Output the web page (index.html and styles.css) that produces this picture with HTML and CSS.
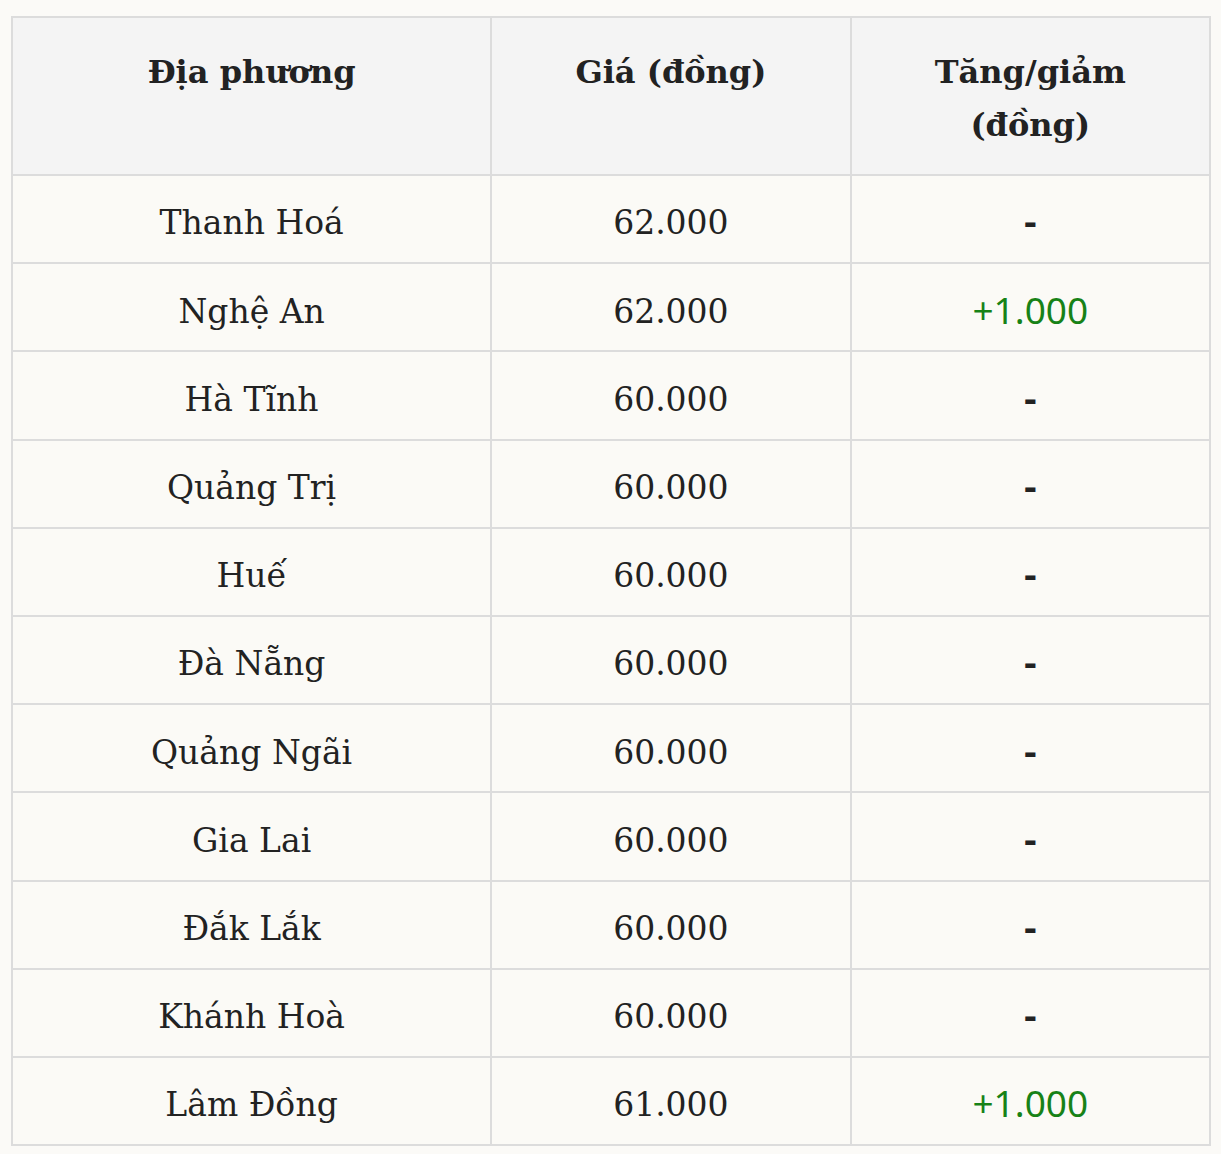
FILE: index.html
```html
<!DOCTYPE html>
<html lang="vi">
<head>
<meta charset="utf-8">
<title>Giá</title>
<link rel="stylesheet" href="styles.css">
</head>
<body>
<table class="price-table">
  <colgroup>
    <col class="col-place">
    <col class="col-price">
    <col class="col-change">
  </colgroup>
  <thead>
    <tr>
      <th>Địa phương</th>
      <th>Giá (đồng)</th>
      <th>Tăng/giảm<br>(đồng)</th>
    </tr>
  </thead>
  <tbody>
    <tr><td>Thanh Hoá</td><td>62.000</td><td class="dash">-</td></tr>
    <tr><td>Nghệ An</td><td>62.000</td><td class="up">+1.000</td></tr>
    <tr><td>Hà Tĩnh</td><td>60.000</td><td class="dash">-</td></tr>
    <tr><td>Quảng Trị</td><td>60.000</td><td class="dash">-</td></tr>
    <tr><td>Huế</td><td>60.000</td><td class="dash">-</td></tr>
    <tr><td>Đà Nẵng</td><td>60.000</td><td class="dash">-</td></tr>
    <tr><td>Quảng Ngãi</td><td>60.000</td><td class="dash">-</td></tr>
    <tr><td>Gia Lai</td><td>60.000</td><td class="dash">-</td></tr>
    <tr><td>Đắk Lắk</td><td>60.000</td><td class="dash">-</td></tr>
    <tr><td>Khánh Hoà</td><td>60.000</td><td class="dash">-</td></tr>
    <tr><td>Lâm Đồng</td><td>61.000</td><td class="up">+1.000</td></tr>
  </tbody>
</table>
</body>
</html>
```

FILE: styles.css
```css
html, body {
  margin: 0;
  padding: 0;
  background: #fbfaf7;
}
body {
  padding: 16px 10px 0 11px;
  font-family: "DejaVu Serif", "Liberation Serif", serif;
  color: #222222;
}
.price-table {
  width: 1200px;
  table-layout: fixed;
  border-collapse: collapse;
  border: 2px solid #dcdcdc;
}
.col-place { width: 40%; }
.col-price { width: 30%; }
.col-change { width: 30%; }
.price-table th,
.price-table td {
  border: 2px solid #dcdcdc;
  text-align: center;
}
.price-table th {
  background: #f4f4f4;
  font-weight: bold;
  font-size: 32px;
  line-height: 53px;
  padding: 28px 10px 22px;
  vertical-align: top;
}
.price-table td {
  background: #fbfaf6;
  font-size: 33px;
  line-height: 53px;
  padding: 20.4px 10px 12.8px;
  vertical-align: middle;
}
.price-table td.dash {
  font-weight: bold;
}
.price-table td.up {
  color: #178217;
  font-family: "Noto Sans", "Open Sans", sans-serif;
  font-size: 37px;
  padding: 18.4px 10px 14.8px;
}
```
